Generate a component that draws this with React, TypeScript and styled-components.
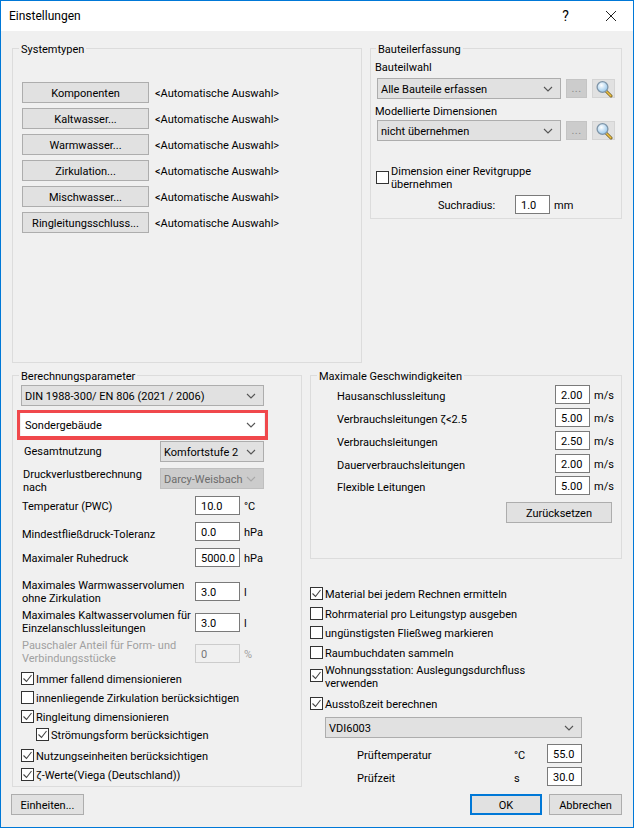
import React from "react";
import styled, { createGlobalStyle } from "styled-components";

const Global = createGlobalStyle`
  html, body { margin: 0; padding: 0; background: #f0f0f0; }
  * { box-sizing: border-box; }
`;

const FONT = `Roboto, Lato, "Liberation Sans", sans-serif`;

const Dialog = styled.div`
  width: 634px;
  height: 828px;
  border: 1px solid #0078d7;
  background: #f0f0f0;
  font-family: ${FONT};
  font-size: 11px;
  line-height: 13px;
  color: #000;
  display: flex;
  flex-direction: column;
  overflow: hidden;
`;
const TitleBar = styled.header`
  height: 30px;
  flex: none;
  background: #fff;
  display: flex;
  align-items: center;
  padding-left: 8px;
  font-size: 12px;
`;
const TitleText = styled.span`
  flex: 1;
  padding-top: 1px;
`;
const TitleButton = styled.span`
  width: 45px;
  height: 30px;
  display: flex;
  align-items: center;
  justify-content: center;
  font-size: 14px;
`;
const Body = styled.main`
  flex: 1;
  display: flex;
  flex-direction: column;
  padding: 17px 11px 0 11px;
`;
const TopRow = styled.section`
  display: flex;
  gap: 8px;
  align-items: flex-start;
`;
const LowerRow = styled.section`
  display: flex;
  gap: 8px;
  margin-top: 12px;
  align-items: flex-start;
`;
const Group = styled.div<{ $w: number; $h: number }>`
  position: relative;
  width: ${(p) => p.$w}px;
  height: ${(p) => p.$h}px;
  border: 1px solid #dcdcdc;
  display: flex;
  flex-direction: column;
  flex: none;
`;
const Legend = styled.span<{ $x?: number }>`
  position: absolute;
  left: ${(p) => p.$x ?? 6}px;
  top: -6px;
  padding: 0 2px;
  background: #f0f0f0;
  line-height: 13px;
`;
const RightColumn = styled.div`
  width: 312px;
  display: flex;
  flex-direction: column;
`;
const SystemList = styled.div`
  display: flex;
  flex-direction: column;
  gap: 5px;
  padding: 33px 0 0 9px;
`;
const SystemRow = styled.div`
  display: flex;
  align-items: center;
  gap: 6px;
`;
const AutoText = styled.span`
  padding-top: 2px;
`;
const PushButton = styled.button<{ $w: number }>`
  width: ${(p) => p.$w}px;
  height: 21px;
  padding: 2px 0 0;
  background: #e1e1e1;
  border: 1px solid #adadad;
  border-radius: 0;
  font: inherit;
  color: #000;
`;
const DefaultButton = styled(PushButton)`
  border: 2px solid #0078d7;
`;
const SelectBox = styled.div<{ $w: number; $h?: number; $white?: boolean; $off?: boolean }>`
  width: ${(p) => p.$w}px;
  height: ${(p) => p.$h ?? 21}px;
  flex: none;
  display: flex;
  align-items: center;
  justify-content: space-between;
  padding: 0 7px 0 3px;
  white-space: nowrap;
  background: ${(p) => (p.$white ? "#fff" : p.$off ? "#cccccc" : "#e1e1e1")};
  border: 1px solid ${(p) => (p.$white ? "#fff" : p.$off ? "#bfbfbf" : "#adadad")};
  color: ${(p) => (p.$off ? "#6d6d6d" : "#000")};
`;
const SelectText = styled.span`
  padding-top: 2px;
`;
const Chevron = ({ off }: { off?: boolean }) => (
  <svg width="10" height="6" viewBox="0 0 10 6" fill="none" aria-hidden="true">
    <path d="M1 1l4 4 4-4" stroke={off ? "#a8a8a8" : "#555"} strokeWidth="1.1" />
  </svg>
);
const Select = ({ text, w, h, white, off }: { text: string; w: number; h?: number; white?: boolean; off?: boolean }) => (
  <SelectBox $w={w} $h={h} $white={white} $off={off}>
    <SelectText>{text}</SelectText>
    <Chevron off={off} />
  </SelectBox>
);

const CaptureColumn = styled.div`
  display: flex;
  flex-direction: column;
  padding: 9px 0 0 4px;
`;
const CaptionLine = styled.div<{ $mt?: number; $pad?: number }>`
  height: 16px;
  margin-top: ${(p) => p.$mt ?? 0}px;
  padding-top: ${(p) => p.$pad ?? 0}px;
  display: flex;
  align-items: center;
`;
const PickRow = styled.div<{ $mt: number }>`
  display: flex;
  align-items: center;
  margin-top: ${(p) => p.$mt}px;
  margin-left: 2px;
`;
const DotsButton = styled.span`
  width: 21px;
  height: 19px;
  margin-left: 5px;
  background: #cccccc;
  border: 1px solid #c4c4c4;
  color: #8a8a8a;
  display: flex;
  align-items: center;
  justify-content: center;
  letter-spacing: 0.5px;
`;
const LensButton = styled.span`
  width: 23px;
  height: 19px;
  margin-left: 5px;
  background: #e1e1e1;
  border: 1px solid #d4d4d4;
  display: flex;
  align-items: center;
  justify-content: center;
`;
const Lens = () => (
  <svg width="18" height="18" viewBox="0 0 18 18" aria-hidden="true">
    <defs>
      <radialGradient id="g" cx="40%" cy="35%" r="70%">
        <stop offset="0" stopColor="#ffffff" />
        <stop offset="1" stopColor="#8fc3ea" />
      </radialGradient>
    </defs>
    <path d="M11 11l5 5" stroke="#6b5a20" strokeWidth="3" strokeLinecap="round" />
    <path d="M11.5 11.5l4.4 4.4" stroke="#f0c040" strokeWidth="1.5" strokeLinecap="round" />
    <circle cx="7.5" cy="7" r="5.4" fill="url(#g)" stroke="#7f95a8" strokeWidth="1.3" />
  </svg>
);

const CheckRow = styled.div<{ $mt?: number; $ml?: number; $tall?: boolean }>`
  display: flex;
  align-items: ${(p) => (p.$tall ? "flex-start" : "center")};
  gap: 2px;
  height: ${(p) => (p.$tall ? 26 : 13)}px;
  margin-top: ${(p) => p.$mt ?? 0}px;
  margin-left: ${(p) => p.$ml ?? 0}px;
  white-space: nowrap;
`;
const CheckText = styled.span<{ $tall?: boolean }>`
  padding-top: ${(p) => (p.$tall ? 0 : 1)}px;
`;
const Box = styled.span<{ $dropTop?: number }>`
  width: 13px;
  height: 13px;
  flex: none;
  border: 1px solid #333;
  background: #fff;
  margin-top: ${(p) => p.$dropTop ?? 0}px;
  display: flex;
  align-items: center;
  justify-content: center;
`;
const Check = ({ on, label, mt, ml, drop, tall }: { on?: boolean; label: React.ReactNode; mt?: number; ml?: number; drop?: number; tall?: boolean }) => (
  <CheckRow $mt={mt} $ml={ml} $tall={tall}>
    <Box $dropTop={drop}>
      {on && (
        <svg width="11" height="11" viewBox="0 0 11 11" fill="none" aria-hidden="true">
          <path d="M1.5 5.5l3 3 5-6.5" stroke="#444" strokeWidth="1.1" />
        </svg>
      )}
    </Box>
    <CheckText $tall={tall}>{label}</CheckText>
  </CheckRow>
);

const Field = styled.input<{ $w: number; $off?: boolean }>`
  width: ${(p) => p.$w}px;
  height: 19px;
  flex: none;
  padding: 2px 0 0 5px;
  border: 1px solid ${(p) => (p.$off ? "#cccccc" : "#7a7a7a")};
  background: ${(p) => (p.$off ? "#f0f0f0" : "#fff")};
  color: ${(p) => (p.$off ? "#777" : "#000")};
  font: inherit;
  border-radius: 0;
  outline: none;
`;
const SearchRow = styled.div`
  display: flex;
  align-items: center;
  margin: 4px 0 0 63px;
`;
const SearchLabel = styled.span`
  width: 77px;
  padding-top: 2px;
`;
const Unit = styled.span<{ $off?: boolean }>`
  margin-left: 4px;
  padding-top: 2px;
  color: ${(p) => (p.$off ? "#a0a0a0" : "#000")};
`;

const ParamColumn = styled.div`
  display: flex;
  flex-direction: column;
  padding: 9px 0 0 8px;
`;
const Highlight = styled.div`
  width: 251px;
  height: 30px;
  margin: 4px 0 0 -4px;
  border: 3px solid #f0484c;
  border-bottom-width: 4px;
  padding: 0 1px;
`;
const FormRow = styled.div<{ $mt: number; $ml?: number; $h?: number }>`
  display: flex;
  align-items: center;
  margin-top: ${(p) => p.$mt}px;
  margin-left: ${(p) => p.$ml ?? 0}px;
  height: ${(p) => p.$h ?? 19}px;
  white-space: nowrap;
`;
const FormLabel = styled.span<{ $w: number; $shift?: number; $lift?: number; $off?: boolean }>`
  width: ${(p) => p.$w}px;
  flex: none;
  padding-top: ${(p) => p.$shift ?? 0}px;
  padding-bottom: ${(p) => p.$lift ?? 0}px;
  color: ${(p) => (p.$off ? "#a0a0a0" : "#000")};
`;

const SpeedColumn = styled.div`
  display: flex;
  flex-direction: column;
  padding: 9px 0 0 26px;
`;
const ResetRow = styled.div`
  display: flex;
  justify-content: flex-end;
  margin: 7px 9px 0 0;
`;
const OptionColumn = styled.div`
  display: flex;
  flex-direction: column;
  padding-top: 28px;
`;
const IndentBlock = styled.div`
  margin-left: 15px;
  margin-top: 7px;
`;
const TestRow = styled.div<{ $mt: number }>`
  display: flex;
  align-items: center;
  margin-top: ${(p) => p.$mt}px;
  padding-left: 47px;
`;
const TestLabel = styled.span`
  width: 157px;
  padding-top: 3px;
`;
const TestUnit = styled.span`
  width: 33px;
  padding-top: 3px;
`;
const Footer = styled.footer`
  display: flex;
  align-items: center;
  margin: 7px 0 0 -1px;
`;
const FooterGap = styled.span`
  flex: 1;
`;
const FooterPair = styled.div`
  display: flex;
  gap: 7px;
`;

const systems = ["Komponenten", "Kaltwasser...", "Warmwasser...", "Zirkulation...", "Mischwasser...", "Ringleitungsschluss..."];
const speeds: [string, string, number][] = [
  ["Hausanschlussleitung", "2.00", 0],
  ["Verbrauchsleitungen ζ<2.5", "5.00", 4],
  ["Verbrauchsleitungen", "2.50", 4],
  ["Dauerverbrauchsleitungen", "2.00", 4],
  ["Flexible Leitungen", "5.00", 3],
];

export default function App() {
  return (
    <>
      <Global />
      <Dialog>
        <TitleBar>
          <TitleText>Einstellungen</TitleText>
          <TitleButton>?</TitleButton>
          <TitleButton>
            <svg width="12" height="12" viewBox="0 0 12 12" fill="none" aria-hidden="true">
              <path d="M1 1l10 10M11 1L1 11" stroke="#222" strokeWidth="1" />
            </svg>
          </TitleButton>
        </TitleBar>
        <Body>
          <TopRow>
            <Group $w={350} $h={315}>
              <Legend>Systemtypen</Legend>
              <SystemList>
                {systems.map((s) => (
                  <SystemRow key={s}>
                    <PushButton $w={127}>{s}</PushButton>
                    <AutoText>&lt;Automatische Auswahl&gt;</AutoText>
                  </SystemRow>
                ))}
              </SystemList>
            </Group>
            <Group $w={252} $h={171}>
              <Legend $x={5}>Bauteilerfassung</Legend>
              <CaptureColumn>
                <CaptionLine $pad={2}>Bauteilwahl</CaptionLine>
                <PickRow $mt={4}>
                  <Select text="Alle Bauteile erfassen" w={184} />
                  <DotsButton>...</DotsButton>
                  <LensButton><Lens /></LensButton>
                </PickRow>
                <CaptionLine $mt={4}>Modellierte Dimensionen</CaptionLine>
                <PickRow $mt={1}>
                  <Select text="nicht übernehmen" w={184} />
                  <DotsButton>...</DotsButton>
                  <LensButton><Lens /></LensButton>
                </PickRow>
                <Check
                  mt={24}
                  ml={1}
                  tall
                  drop={6}
                  label={<>Dimension einer Revitgruppe<br />übernehmen</>}
                />
                <SearchRow>
                  <SearchLabel>Suchradius:</SearchLabel>
                  <Field $w={35} defaultValue="1.0" readOnly />
                  <Unit>mm</Unit>
                </SearchRow>
              </CaptureColumn>
            </Group>
          </TopRow>
          <LowerRow>
            <Group $w={290} $h={412}>
              <Legend>Berechnungsparameter</Legend>
              <ParamColumn>
                <Select text="DIN 1988-300/ EN 806 (2021 / 2006)" w={243} />
                <Highlight>
                  <Select text="Sondergebäude" w={243} h={23} white />
                </Highlight>
                <FormRow $mt={1} $ml={3} $h={21}>
                  <FormLabel $w={136}>Gesamtnutzung</FormLabel>
                  <Select text="Komfortstufe 2" w={104} />
                </FormRow>
                <FormRow $mt={6} $ml={2} $h={21}>
                  <FormLabel $w={137} $shift={4}>Druckverlustberechnung<br />nach</FormLabel>
                  <Select text="Darcy-Weisbach" w={104} off />
                </FormRow>
                <FormRow $mt={7} $ml={1}>
                  <FormLabel $w={173} $shift={2}>Temperatur (PWC)</FormLabel>
                  <Field $w={45} defaultValue="10.0" readOnly />
                  <Unit>°C</Unit>
                </FormRow>
                <FormRow $mt={7} $ml={1}>
                  <FormLabel $w={173} $shift={6}>Mindestfließdruck-Toleranz</FormLabel>
                  <Field $w={45} defaultValue="0.0" readOnly />
                  <Unit>hPa</Unit>
                </FormRow>
                <FormRow $mt={7} $ml={1}>
                  <FormLabel $w={173} $shift={2}>Maximaler Ruhedruck</FormLabel>
                  <Field $w={45} defaultValue="5000.0" readOnly />
                  <Unit>hPa</Unit>
                </FormRow>
                <FormRow $mt={15} $ml={1}>
                  <FormLabel $w={173}>Maximales Warmwasservolumen<br />ohne Zirkulation</FormLabel>
                  <Field $w={45} defaultValue="3.0" readOnly />
                  <Unit>l</Unit>
                </FormRow>
                <FormRow $mt={12} $ml={1}>
                  <FormLabel $w={173} $lift={2}>Maximales Kaltwasservolumen für<br />Einzelanschlussleitungen</FormLabel>
                  <Field $w={45} defaultValue="3.0" readOnly />
                  <Unit>l</Unit>
                </FormRow>
                <FormRow $mt={12} $ml={1}>
                  <FormLabel $w={173} $lift={3} $off>Pauschaler Anteil für Form- und<br />Verbindungsstücke</FormLabel>
                  <Field $w={45} defaultValue="0" readOnly $off />
                  <Unit $off>%</Unit>
                </FormRow>
                <Check mt={9} on label="Immer fallend dimensionieren" />
                <Check mt={6} label="innenliegende Zirkulation berücksichtigen" />
                <Check mt={6} on label="Ringleitung dimensionieren" />
                <Check mt={5} ml={15} on label="Strömungsform berücksichtigen" />
                <Check mt={8} on label="Nutzungseinheiten berücksichtigen" />
                <Check mt={6} on label="ζ-Werte(Viega (Deutschland))" />
              </ParamColumn>
            </Group>
            <RightColumn>
              <Group $w={312} $h={184}>
                <Legend>Maximale Geschwindigkeiten</Legend>
                <SpeedColumn>
                  {speeds.map(([label, value, gap]) => (
                    <FormRow key={label} $mt={gap}>
                      <FormLabel $w={218} $shift={3}>{label}</FormLabel>
                      <Field $w={35} defaultValue={value} readOnly />
                      <Unit>m/s</Unit>
                    </FormRow>
                  ))}
                  <ResetRow>
                    <PushButton $w={106}>Zurücksetzen</PushButton>
                  </ResetRow>
                </SpeedColumn>
              </Group>
              <OptionColumn>
                <Check on label="Material bei jedem Rechnen ermitteln" />
                <Check mt={7} label="Rohrmaterial pro Leitungstyp ausgeben" />
                <Check mt={6} label="ungünstigsten Fließweg markieren" />
                <Check mt={7} label="Raumbuchdaten sammeln" />
                <Check
                  mt={5}
                  tall
                  drop={5}
                  on
                  label={<>Wohnungsstation: Auslegungsdurchfluss<br />verwenden</>}
                />
                <Check mt={7} on label="Ausstoßzeit berechnen" />
                <IndentBlock>
                  <Select text="VDI6003" w={257} />
                </IndentBlock>
                <TestRow $mt={6}>
                  <TestLabel>Prüftemperatur</TestLabel>
                  <TestUnit>°C</TestUnit>
                  <Field $w={35} defaultValue="55.0" readOnly />
                </TestRow>
                <TestRow $mt={4}>
                  <TestLabel>Prüfzeit</TestLabel>
                  <TestUnit>s</TestUnit>
                  <Field $w={35} defaultValue="30.0" readOnly />
                </TestRow>
              </OptionColumn>
            </RightColumn>
          </LowerRow>
          <Footer>
            <PushButton $w={73}>Einheiten...</PushButton>
            <FooterGap />
            <FooterPair>
              <DefaultButton $w={72}>OK</DefaultButton>
              <PushButton $w={73}>Abbrechen</PushButton>
            </FooterPair>
          </Footer>
        </Body>
      </Dialog>
    </>
  );
}
